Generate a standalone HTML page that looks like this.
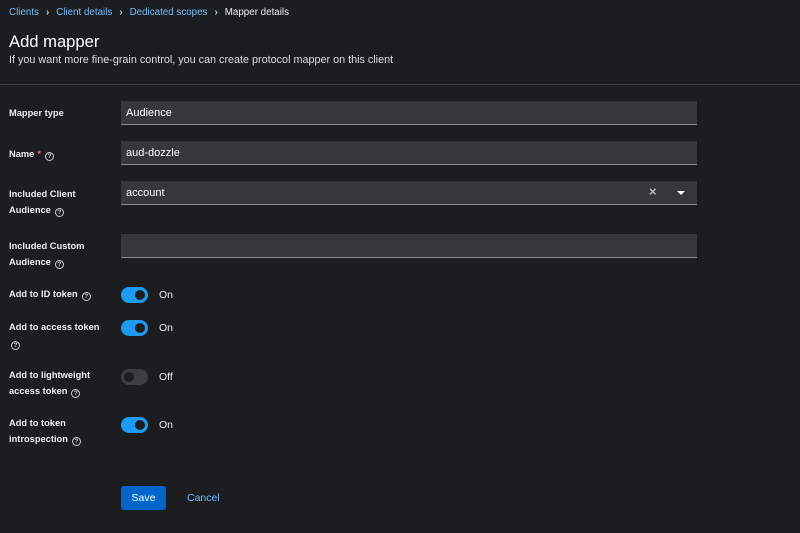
<!DOCTYPE html>
<html><head><style>
*{margin:0;padding:0;box-sizing:border-box}
body{width:800px;height:533px;background:#1b1d21;font-family:"Liberation Sans",sans-serif;color:#e0e0e0;position:relative;overflow:hidden}
.a{position:absolute}
.bc{top:7px;left:9px;font-size:9.8px;white-space:nowrap}
.bc a{color:#73bcf7}
.bc .s{color:#ccc;margin:0 7px;font-weight:bold}
h1{position:absolute;top:32px;left:9px;font-size:16.6px;font-weight:normal;color:#fff}
.sub{top:54px;left:9px;font-size:10.8px;color:#ddd}
.hr{top:84px;left:0;width:800px;height:1px;background:#3c3f42}
.lbl{left:9px;font-size:9.3px;font-weight:bold;color:#eee;line-height:16px}
.q{display:inline-block;width:9px;height:9px;border:1px solid #ccc;border-radius:50%;font-size:6.5px;text-align:center;line-height:8px;font-weight:bold;margin-left:4px;vertical-align:-1px;color:#ccc}
.req{color:#f0616d;margin-left:3px}
.in{left:121px;width:576px;height:24px;background:#36373b;border-bottom:1.5px solid #8a8d90;font-size:11px;color:#fff;padding:5px 5px;line-height:14px}
.tg{left:121px;width:27px;height:16px;border-radius:8px;background:#1d9bf0}
.tg::after{content:"";position:absolute;right:3px;top:3px;width:10px;height:10px;border-radius:50%;background:#1b1d21}
.tg.off{background:#3c3f42}
.tg.off::after{left:3px;right:auto;background:#1b1d21}
.tl{left:159px;font-size:10.5px;color:#eee}
</style></head><body>
<div class="a bc"><a>Clients</a><span class="s">›</span><a>Client details</a><span class="s">›</span><a>Dedicated scopes</a><span class="s">›</span><span style="color:#eee">Mapper details</span></div>
<h1>Add mapper</h1>
<div class="a sub">If you want more fine-grain control, you can create protocol mapper on this client</div>
<div class="a hr"></div>

<div class="a lbl" style="top:105px">Mapper type</div>
<div class="a in" style="top:101px">Audience</div>

<div class="a lbl" style="top:146px">Name<span class="req">*</span><span class="q">?</span></div>
<div class="a in" style="top:141px">aud-dozzle</div>

<div class="a lbl" style="top:186px">Included Client<br>Audience<span class="q">?</span></div>
<div class="a in" style="top:181px">account<span style="position:absolute;left:528px;top:4px;font-size:13px;color:#bbb;font-weight:bold">×</span><span style="position:absolute;left:556px;top:10px;border-left:4px solid transparent;border-right:4px solid transparent;border-top:4px solid #fff"></span></div>

<div class="a lbl" style="top:238px">Included Custom<br>Audience<span class="q">?</span></div>
<div class="a in" style="top:234px"></div>

<div class="a lbl" style="top:286px">Add to ID token<span class="q">?</span></div>
<div class="a tg" style="top:287px"></div><div class="a tl" style="top:289px">On</div>

<div class="a lbl" style="top:319px">Add to access token<br><span class="q" style="margin-left:2px">?</span></div>
<div class="a tg" style="top:320px"></div><div class="a tl" style="top:322px">On</div>

<div class="a lbl" style="top:367px">Add to lightweight<br>access token<span class="q">?</span></div>
<div class="a tg off" style="top:369px"></div><div class="a tl" style="top:371px">Off</div>

<div class="a lbl" style="top:415px">Add to token<br>introspection<span class="q">?</span></div>
<div class="a tg" style="top:417px"></div><div class="a tl" style="top:419px">On</div>

<div class="a" style="left:121px;top:486px;width:45px;height:24px;background:#0066cc;border-radius:3px;color:#fff;font-size:10.5px;text-align:center;line-height:24px">Save</div>
<div class="a" style="left:187px;top:492px;font-size:10.5px;color:#73bcf7">Cancel</div>
</body></html>
